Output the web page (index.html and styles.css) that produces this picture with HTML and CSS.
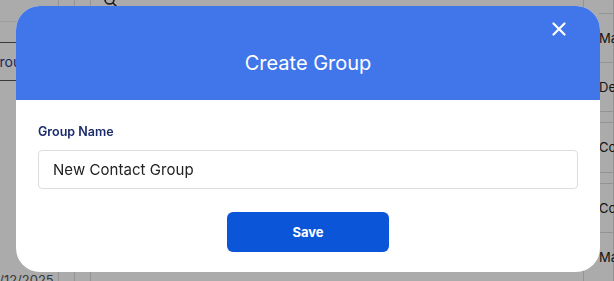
FILE: index.html
```html
<!DOCTYPE html>
<html lang="en">

<head>
  <meta charset="UTF-8">
  <meta name="viewport" content="width=device-width, initial-scale=1.0">
  <title>Create Group</title>
  <link rel="stylesheet" href="styles.css">
</head>

<body>
  <!-- page behind the dialog -->
  <div class="page">
    <div class="side">
      <div class="side-search">
        <svg class="search-icon" width="16" height="16" viewBox="0 0 16 16">
          <circle cx="6.5" cy="6.5" r="4.5" fill="none" stroke="#222" stroke-width="1.6"/>
          <path d="M10 10 L14 14" stroke="#222" stroke-width="1.6" stroke-linecap="round"/>
        </svg>
      </div>
      <div class="side-tab">Groups</div>
      <div class="side-fill"></div>
      <div class="side-date">12/12/2025</div>
    </div>
    <div class="col narrow"></div>
    <div class="col narrow"></div>
    <div class="col wide"></div>
    <div class="col names">
      <div class="cell">Mary</div>
      <div class="cell">Dennis</div>
      <div class="cell gap"></div>
      <div class="cell">Connor</div>
      <div class="cell gap"></div>
      <div class="cell">Connie</div>
      <div class="cell">Mark</div>
    </div>
  </div>

  <div class="backdrop"></div>

  <div class="modal">
    <div class="modal-header">
      <h2>Create Group</h2>
      <button class="close-btn" aria-label="Close">
        <svg width="14" height="14" viewBox="0 0 14 14">
          <path d="M1.5 1.5 L12.5 12.5 M12.5 1.5 L1.5 12.5" stroke="#fff" stroke-width="2.2" stroke-linecap="round"/>
        </svg>
      </button>
    </div>
    <div class="modal-body">
      <label class="field-label" for="group-name">Group Name</label>
      <input id="group-name" class="field-input" type="text" value="New Contact Group">
      <div class="actions">
        <button class="save-btn">Save</button>
      </div>
    </div>
  </div>
</body>

</html>
```

FILE: styles.css
```css
body {
  margin: 0;
  font-family: Inter, "Liberation Sans", sans-serif;
  background: #fff;
  overflow: hidden;
}

.page {
  display: flex;
  height: 281px;
  overflow: hidden;
  color: #222;
  font-size: 14px;
}

.side {
  width: 58px;
  display: flex;
  flex-direction: column;
  border-right: 1px solid #ddd;
}

.side-search {
  height: 21px;
  border-bottom: 1px solid #eee;
  position: relative;
}

.search-icon {
  position: absolute;
  left: 103px;
  top: -7px;
}

.side-tab {
  height: 37px;
  margin-top: 20px;
  border-top: 1px solid #555;
  border-bottom: 1px solid #555;
  line-height: 37px;
  margin-left: -11px;
  color: #1d3c8f;
  white-space: nowrap;
}

.side-fill {
  flex: 1;
}

.side-date {
  height: 12px;
  line-height: 22px;
  margin-left: -14px;
  color: #555;
  font-size: 13px;
  white-space: nowrap;
}

.col {
  border-right: 1px solid #ddd;
}

.narrow {
  width: 15px;
}

.wide {
  flex: 1;
}

.names {
  width: 14px;
  padding-left: 15px;
  display: flex;
  flex-direction: column;
  padding-top: 13px;
  font-size: 13px;
}

.cell {
  height: 61px;
  border-top: 1px solid #ddd;
  display: flex;
  align-items: center;
  white-space: nowrap;
  color: #222;
}

.cell.gap {
  height: 13px;
}

.backdrop {
  position: fixed;
  inset: 0;
  background: rgba(0, 0, 0, 0.33);
}

.modal {
  position: absolute;
  left: 16px;
  top: 6px;
  width: 584px;
  height: 266px;
  background: #fff;
  border-radius: 24px;
  overflow: hidden;
  display: flex;
  flex-direction: column;
}

.modal-header {
  position: relative;
  height: 94px;
  background: #4176eb;
  display: flex;
  align-items: center;
  justify-content: center;
}

.modal-header h2 {
  margin: 20px 0 0;
  color: #fff;
  font-size: 20px;
  font-weight: 400;
}

.close-btn {
  position: absolute;
  right: 34px;
  top: 16px;
  width: 14px;
  height: 14px;
  padding: 0;
  border: none;
  background: none;
  cursor: pointer;
}

.modal-body {
  padding: 24px 22px 0;
  display: flex;
  flex-direction: column;
}

.field-label {
  color: #1b2b6b;
  font-size: 12.5px;
  font-weight: 600;
  margin-bottom: 11px;
}

.field-input {
  height: 39px;
  box-sizing: border-box;
  border: 1px solid #ddd;
  border-radius: 4px;
  padding: 0 14px;
  font-family: inherit;
  font-size: 15px;
  letter-spacing: 0.05px;
  color: #222;
}

.actions {
  display: flex;
  justify-content: center;
  margin-top: 23px;
}

.save-btn {
  width: 162px;
  height: 40px;
  border: none;
  border-radius: 6px;
  background: #0a55d8;
  color: #fff;
  font-family: inherit;
  font-size: 13px;
  font-weight: 700;
  cursor: pointer;
}
```
